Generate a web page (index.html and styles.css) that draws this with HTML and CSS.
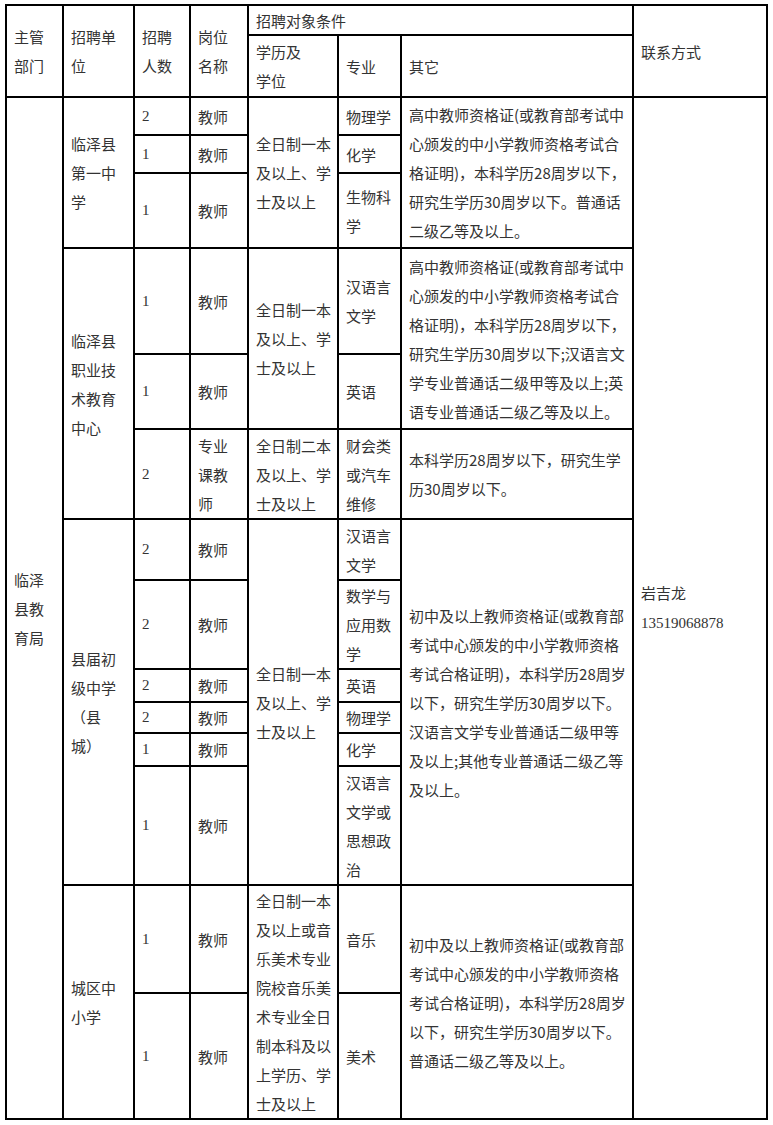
FILE: index.html
```html
<!DOCTYPE html>
<html lang="zh-CN">
<head>
<meta charset="utf-8">
<title>招聘计划表</title>
<link rel="stylesheet" href="styles.css">
</head>
<body>
<table class="plan">
  <colgroup>
    <col class="c-dept">
    <col class="c-unit">
    <col class="c-num">
    <col class="c-post">
    <col class="c-edu">
    <col class="c-major">
    <col class="c-other">
    <col class="c-contact">
  </colgroup>
  <tr class="h30">
    <td rowspan="2">主管<br>部门</td>
    <td rowspan="2">招聘单<br>位</td>
    <td rowspan="2">招聘<br>人数</td>
    <td rowspan="2">岗位<br>名称</td>
    <td colspan="3" class="tight">招聘对象条件</td>
    <td rowspan="2" class="top-contact">联系方式</td>
  </tr>
  <tr class="h62">
    <td>学历及<br>学位</td>
    <td>专业</td>
    <td>其它</td>
  </tr>

  <tr class="h38">
    <td rowspan="14">临泽<br>县教<br>育局</td>
    <td rowspan="3">临泽县<br>第一中<br>学</td>
    <td class="num">2</td>
    <td>教师</td>
    <td rowspan="3">全日制一本<br>及以上、学<br>士及以上</td>
    <td>物理学</td>
    <td rowspan="3">高中教师资格证(或教育部考试中<br>心颁发的中小学教师资格考试合<br>格证明)，本科学历28周岁以下，<br>研究生学历30周岁以下。普通话<br>二级乙等及以上。</td>
    <td rowspan="14" class="contact">岩吉龙<br><span class="num">13519068878</span></td>
  </tr>
  <tr class="h38">
    <td class="num">1</td>
    <td>教师</td>
    <td>化学</td>
  </tr>
  <tr class="h75">
    <td class="num">1</td>
    <td>教师</td>
    <td>生物科<br>学</td>
  </tr>

  <tr class="h106">
    <td rowspan="3">临泽县<br>职业技<br>术教育<br>中心</td>
    <td class="num">1</td>
    <td>教师</td>
    <td rowspan="2">全日制一本<br>及以上、学<br>士及以上</td>
    <td>汉语言<br>文学</td>
    <td rowspan="2">高中教师资格证(或教育部考试中<br>心颁发的中小学教师资格考试合<br>格证明)，本科学历28周岁以下，<br>研究生学历30周岁以下;汉语言文<br>学专业普通话二级甲等及以上;英<br>语专业普通话二级乙等及以上。</td>
  </tr>
  <tr class="h75">
    <td class="num">1</td>
    <td>教师</td>
    <td>英语</td>
  </tr>
  <tr class="h90">
    <td class="num">2</td>
    <td>专业<br>课教<br>师</td>
    <td>全日制二本<br>及以上、学<br>士及以上</td>
    <td>财会类<br>或汽车<br>维修</td>
    <td>本科学历28周岁以下，研究生学<br>历30周岁以下。</td>
  </tr>

  <tr class="h61">
    <td rowspan="6">县届初<br>级中学<br>（县<br>城）</td>
    <td class="num">2</td>
    <td>教师</td>
    <td rowspan="6">全日制一本<br>及以上、学<br>士及以上</td>
    <td>汉语言<br>文学</td>
    <td rowspan="6">初中及以上教师资格证(或教育部<br>考试中心颁发的中小学教师资格<br>考试合格证明)，本科学历28周岁<br>以下，研究生学历30周岁以下。<br>汉语言文学专业普通话二级甲等<br>及以上;其他专业普通话二级乙等<br>及以上。</td>
  </tr>
  <tr class="h89">
    <td class="num">2</td>
    <td>教师</td>
    <td>数学与<br>应用数<br>学</td>
  </tr>
  <tr class="h33">
    <td class="num">2</td>
    <td>教师</td>
    <td>英语</td>
  </tr>
  <tr class="h31">
    <td class="num">2</td>
    <td>教师</td>
    <td>物理学</td>
  </tr>
  <tr class="h33">
    <td class="num">1</td>
    <td>教师</td>
    <td>化学</td>
  </tr>
  <tr class="h119">
    <td class="num">1</td>
    <td>教师</td>
    <td>汉语言<br>文学或<br>思想政<br>治</td>
  </tr>

  <tr class="h108">
    <td rowspan="2">城区中<br>小学</td>
    <td class="num">1</td>
    <td>教师</td>
    <td rowspan="2">全日制一本<br>及以上或音<br>乐美术专业<br>院校音乐美<br>术专业全日<br>制本科及以<br>上学历、学<br>士及以上</td>
    <td>音乐</td>
    <td rowspan="2">初中及以上教师资格证(或教育部<br>考试中心颁发的中小学教师资格<br>考试合格证明)，本科学历28周岁<br>以下，研究生学历30周岁以下。<br>普通话二级乙等及以上。</td>
  </tr>
  <tr class="h126">
    <td class="num">1</td>
    <td>教师</td>
    <td>美术</td>
  </tr>
</table>
</body>
</html>
```

FILE: styles.css
```css
html, body {
  margin: 0;
  padding: 0;
  background: #fff;
}

.plan {
  margin: 4px 0 0 5px;
  width: 763px;
  table-layout: fixed;
  border-collapse: separate;
  border-spacing: 0;
  border: 1px solid #000;
  font-family: "Noto Sans CJK SC", "Microsoft YaHei", sans-serif;
  font-size: 15px;
  line-height: 29px;
  color: #333;
}

.plan td {
  border: 1px solid #000;
  padding: 0 0 0 7px;
  vertical-align: middle;
  white-space: nowrap;
  overflow: visible;
}

.c-dept { width: 57px; }
.c-unit { width: 71px; }
.c-num { width: 56px; }
.c-post { width: 58px; }
.c-edu { width: 90px; }
.c-major { width: 63px; }
.c-other { width: 232px; }
.c-contact { width: 134px; }

.plan td.tight { line-height: 27px; }

.num {
  font-family: "Liberation Serif", "Times New Roman", serif;
  font-size: 15px;
}

.contact .num { letter-spacing: 0; }

.h30 { height: 30px; }
.h62 { height: 62px; }
.h38 { height: 38px; }
.h75 { height: 75px; }
.h106 { height: 106px; }
.h90 { height: 90px; }
.h61 { height: 61px; }
.h89 { height: 89px; }
.h33 { height: 33px; }
.h31 { height: 31px; }
.h119 { height: 119px; }
.h108 { height: 108px; }
.h126 { height: 126px; }
```
